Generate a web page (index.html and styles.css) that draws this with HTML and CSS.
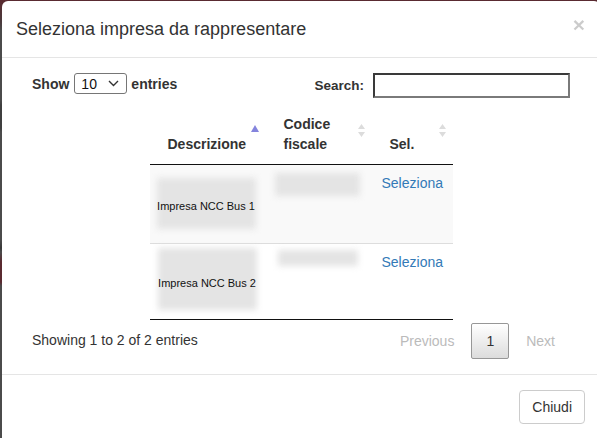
FILE: index.html
```html
<!DOCTYPE html>
<html lang="it">
<head>
<meta charset="utf-8">
<title>Seleziona impresa</title>
<link rel="stylesheet" href="styles.css">
</head>
<body>
<div class="modal">
  <div class="modal-header">
    <h4 class="modal-title">Seleziona impresa da rappresentare</h4>
    <span class="close">×</span>
  </div>
  <div class="modal-body">
    <div class="dt-top">
      <label class="dt-length">Show
        <span class="select">10
          <svg class="chev" width="11" height="7" viewBox="0 0 11 7"><path d="M1 1l4.5 4.5L10 1" fill="none" stroke="#333" stroke-width="1.4"/></svg>
        </span>
        entries</label>
      <label class="dt-filter">Search:<span class="search-input"></span></label>
    </div>
    <table class="dt">
      <thead>
        <tr>
          <th class="c-desc">Descrizione
            <svg class="sort-asc" width="8" height="7" viewBox="0 0 8 7"><path d="M4 0L8 7H0z" fill="#8484dd"/></svg>
          </th>
          <th class="c-cf">Codice fiscale
            <svg class="sort-both" width="7" height="13" viewBox="0 0 7 13"><path d="M3.5 0L7 5H0z M3.5 13L0 8h7z" fill="#dcdcdc"/></svg>
          </th>
          <th class="c-sel">Sel.
            <svg class="sort-both" width="7" height="13" viewBox="0 0 7 13"><path d="M3.5 0L7 5H0z M3.5 13L0 8h7z" fill="#dcdcdc"/></svg>
          </th>
        </tr>
      </thead>
      <tbody>
        <tr class="odd">
          <td><div class="ph ph-d1"><span>Impresa NCC Bus 1</span></div></td>
          <td><div class="ph ph-c1"></div></td>
          <td><a class="sel-link" href="#">Seleziona</a></td>
        </tr>
        <tr class="even">
          <td><div class="ph ph-d2"><span>Impresa NCC Bus 2</span></div></td>
          <td><div class="ph ph-c2"></div></td>
          <td><a class="sel-link" href="#">Seleziona</a></td>
        </tr>
      </tbody>
    </table>
    <div class="dt-bottom">
      <div class="dt-info">Showing 1 to 2 of 2 entries</div>
      <div class="dt-paginate">
        <span class="pg disabled">Previous</span>
        <span class="pg current">1</span>
        <span class="pg disabled">Next</span>
      </div>
    </div>
  </div>
  <div class="modal-footer">
    <button class="btn">Chiudi</button>
  </div>
</div>
</body>
</html>
```

FILE: styles.css
```css
html, body {
  margin: 0;
  padding: 0;
  height: 100%;
  overflow: hidden;
}
body {
  background: linear-gradient(180deg, #5a2a30 0, #4a3a3c 22px, #4b4b4b 30px, #4b4b4b 100px, #3f3f3f 105px, #3f3f3f 128px, #4b4b4b 132px, #4b4b4b 240px, #383838 248px, #4b4b4b 252px, #5a2a30 262px, #5a2a30 282px, #4b4b4b 286px);
  font-family: "Liberation Sans", Arial, sans-serif;
  font-size: 14px;
  line-height: 20px;
  color: #333;
}
.modal {
  margin: 1px 0 0 2px;
  width: 598px;
  height: 480px;
  background: #fff;
  border-radius: 6px;
}
.modal-header {
  display: flex;
  align-items: flex-start;
  justify-content: space-between;
  padding: 15px 15px 15px 14px;
  border-bottom: 1px solid #e5e5e5;
}
.modal-title {
  margin: 0;
  font-size: 18px;
  font-weight: normal;
  line-height: 26px;
  color: #333;
}
.close {
  font-size: 21px;
  font-weight: bold;
  line-height: 21px;
  color: #000;
  opacity: 0.2;
  margin-top: -2px;
}
.modal-body {
  padding: 15px 30px 15px 30px;
}
.dt-top {
  display: flex;
  justify-content: space-between;
  align-items: flex-start;
  height: 31px;
}
.dt-length, .dt-filter {
  font-weight: bold;
  display: flex;
  align-items: center;
}
.dt-length {
  height: 21px;
}
.select {
  display: inline-flex;
  align-items: center;
  justify-content: space-between;
  box-sizing: border-box;
  width: 53px;
  height: 21px;
  margin: 0 4px 0 5px;
  padding: 0 7px 0 6px;
  border: 1px solid #767676;
  border-radius: 3px;
  font-weight: normal;
  color: #111;
}
.dt-filter {
  height: 25px;
  font-size: 13.5px;
}
.search-input {
  display: inline-block;
  box-sizing: border-box;
  width: 197px;
  height: 25px;
  margin-left: 9px;
  border-style: solid;
  border-width: 2px;
  border-color: #3a3a3a #7a7a7a #7a7a7a #3a3a3a;
  background: #fff;
}
.dt {
  margin: 0 auto;
  width: 303px;
  table-layout: fixed;
  border-collapse: collapse;
  border-bottom: 1px solid #111;
}
.dt th {
  position: relative;
  padding: 10px 18px;
  text-align: left;
  vertical-align: bottom;
  font-weight: bold;
  line-height: 20px;
  border-bottom: 1px solid #111;
}
.c-desc { width: 80px; }
.c-cf { width: 70px; }
.c-sel { width: 45px; }
.sort-asc {
  position: absolute;
  right: 7px;
  top: 21px;
}
.sort-both {
  position: absolute;
  right: 7px;
  top: 20px;
}
.dt td {
  padding: 8px 10px;
  vertical-align: top;
  line-height: 20px;
}
.dt tr.odd td { background: #f9f9f9; }
.dt tr.even td { border-top: 1px solid #ddd; }
.ph {
  position: relative;
  display: flex;
  align-items: center;
  justify-content: center;
}
.ph::before {
  content: "";
  position: absolute;
  inset: 1px;
  background: #e4e4e4;
  filter: blur(3px);
}
.ph span {
  position: relative;
  font-size: 11px;
  color: #111;
  white-space: nowrap;
}
.ph-d1 {
  height: 53px;
  margin: 4px -1px 5px -4px;
  padding-top: 4px;
  box-sizing: border-box;
}
.ph-c1 {
  height: 25px;
  margin: -1px 0 0 -2px;
  width: 87px;
}
.ph-d2 {
  height: 64px;
  margin: -5px -2px 0 -3px;
  padding-top: 8px;
  box-sizing: border-box;
}
.ph-c2 {
  height: 18px;
  margin: -3px 0 0 1px;
  width: 82px;
}
.sel-link {
  color: #337ab7;
  text-decoration: none;
  white-space: nowrap;
}
.dt-bottom {
  display: flex;
  justify-content: space-between;
  align-items: flex-start;
  padding-top: 3px;
}
.dt-info {
  padding-top: 7px;
}
.dt-paginate {
  display: flex;
}
.pg {
  box-sizing: border-box;
  padding: 7px 14px;
  margin-left: 2px;
  border: 1px solid transparent;
  border-radius: 2px;
  line-height: 20px;
}
.pg.disabled {
  color: #bbb;
}
.pg.current {
  color: #333;
  border-color: #979797;
  background: linear-gradient(180deg, #fff 0%, #dcdcdc 100%);
}
.modal-footer {
  display: flex;
  justify-content: flex-end;
  padding: 15px;
  border-top: 1px solid #e5e5e5;
}
.btn {
  font-family: "Liberation Sans", Arial, sans-serif;
  font-size: 14px;
  line-height: 20px;
  padding: 6px 12px;
  color: #333;
  background: #fff;
  border: 1px solid #ccc;
  border-radius: 4px;
}
```
